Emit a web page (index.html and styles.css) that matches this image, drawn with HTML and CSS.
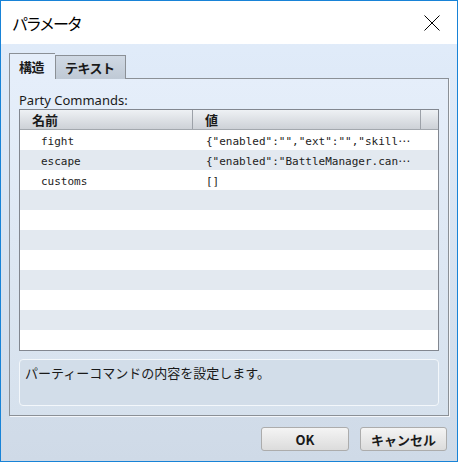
FILE: index.html
```html
<!DOCTYPE html>
<html lang="ja">
<head>
<meta charset="utf-8">
<title>パラメータ</title>
<link rel="stylesheet" href="styles.css">
</head>
<body>
<div class="window">
  <div class="titlebar">
    <span class="title">パラメータ</span>
    <svg class="close" width="16" height="16" viewBox="0 0 16 16"><path d="M0.5 0.5 L15.5 15.5 M15.5 0.5 L0.5 15.5" stroke="#000" stroke-width="1" fill="none"/></svg>
  </div>
  <div class="content">
    <div class="tabs">
      <div class="tab active">構造</div>
      <div class="tab">テキスト</div>
    </div>
    <div class="panel">
      <div class="label">Party Commands:</div>
      <div class="table">
        <div class="thead">
          <div class="th c1">名前</div>
          <div class="th c2">値</div>
          <div class="th c3"></div>
        </div>
        <div class="row"><span class="name">fight</span><span class="val">{"enabled":"","ext":"","skill<span class="ell">⋯</span></span></div>
        <div class="row"><span class="name">escape</span><span class="val">{"enabled":"BattleManager.can<span class="ell">⋯</span></span></div>
        <div class="row"><span class="name">customs</span><span class="val">[]</span></div>
        <div class="row"></div>
        <div class="row"></div>
        <div class="row"></div>
        <div class="row"></div>
        <div class="row"></div>
        <div class="row"></div>
        <div class="row"></div>
        <div class="row"></div>
      </div>
      <div class="desc">パーティーコマンドの内容を設定します。</div>
    </div>
    <div class="buttons">
      <div class="btn ok">OK</div>
      <div class="btn cancel">キャンセル</div>
    </div>
  </div>
</div>
</body>
</html>
```
FILE: styles.css
```css
html, body {
  margin: 0;
  padding: 0;
}
body {
  font-family: "Noto Sans", "Noto Sans CJK JP", sans-serif;
  color: #1a1a1a;
}
.window {
  width: 458px;
  height: 462px;
  box-sizing: border-box;
  border: 1px solid #1883d7;
  display: flex;
  flex-direction: column;
  background: linear-gradient(#e2edfb, #cfdae7);
}
.titlebar {
  height: 43px;
  background: #fff;
  display: flex;
  align-items: center;
  justify-content: space-between;
  padding: 0 17px 0 11px;
  flex-shrink: 0;
}
.title {
  font-family: "Noto Sans CJK JP", sans-serif;
  font-size: 16px;
  letter-spacing: -2.2px;
  color: #000;
  margin-top: 0;
}
.close {
  display: block;
  margin-top: 1px;
}
.content {
  display: flex;
  flex-direction: column;
  padding: 10px 9px 0 8px;
}
.tabs {
  display: flex;
  align-items: flex-end;
  height: 25px;
  position: relative;
  z-index: 1;
  margin-bottom: -1px;
}
.tab {
  font-family: "Noto Sans CJK JP", sans-serif;
  font-weight: bold;
  font-size: 13px;
  letter-spacing: -0.5px;
  color: #1a1a1a;
  box-sizing: border-box;
  height: 24px;
  border: 1px solid #8b9096;
  border-bottom: none;
  background: linear-gradient(#d0d9e4, #bfc9d5);
  padding: 0 10px 0 9px;
  display: flex;
  align-items: center;
}
.tab.active {
  height: 26px;
  background: #e5eefa;
  border-right: none;
  padding: 0 9px 0 9px;
  width: 46px;
}
.tab:not(.active) {
  width: 71px;
  padding-left: 9px;
}
.panel {
  box-sizing: border-box;
  width: 440px;
  height: 338px;
  border: 1px solid #8b9096;
  box-shadow: 1px 1px 0 #f4f7fb;
  padding: 13px 9px 9px 9px;
  display: flex;
  flex-direction: column;
  background: linear-gradient(#e5eefa, #d6e1ed);
}
.label {
  font-size: 13px;
  line-height: 16px;
  height: 16px;
  margin-bottom: 1px;
  color: #1a1a1a;
}
.table {
  box-sizing: border-box;
  height: 242px;
  border: 1px solid #828790;
  background: #fff;
  display: flex;
  flex-direction: column;
}
.thead {
  display: grid;
  grid-template-columns: 173px 228px 17px;
  height: 20px;
  box-sizing: border-box;
  border-bottom: 1px solid #a3a8ae;
  background: linear-gradient(#eef1f4, #cdd1d7);
}
.th {
  font-family: "Noto Sans CJK JP", sans-serif;
  font-weight: bold;
  font-size: 13px;
  line-height: 19px;
  padding-left: 12px;
  color: #1a1a1a;
  border-right: 1px solid #9ca1a8;
}
.th.c3 {
  border-right: none;
  padding: 0;
}
.row {
  box-sizing: border-box;
  height: 20px;
  padding-top: 2px;
  overflow: hidden;
  display: grid;
  grid-template-columns: 174px 1fr;
  font-family: "DejaVu Sans Mono", monospace;
  font-size: 11px;
  line-height: 19px;
  color: #1c1c1c;
  white-space: nowrap;
}
.row:nth-of-type(2n+1) {
  background: #e3e9f0;
}
.name {
  padding-left: 21px;
}
.val {
  padding-left: 12px;
  overflow: hidden;
}
.ell {
  font-family: "DejaVu Sans", sans-serif;
  font-size: 12px;
  letter-spacing: 0;
}
.desc {
  box-sizing: border-box;
  margin-top: 8px;
  height: 47px;
  border: 1px solid #f3f7fb;
  border-radius: 4px;
  background: #d2dde9;
  padding: 3px 0 0 5px;
  font-family: "Noto Sans CJK JP", sans-serif;
  font-size: 13px;
  line-height: 20px;
  color: #1a1a1a;
}
.buttons {
  display: flex;
  justify-content: flex-end;
  gap: 11px;
  margin-top: 11px;
  padding-right: 1px;
}
.btn {
  box-sizing: border-box;
  height: 24px;
  border: 1px solid #acacac;
  border-radius: 3px;
  background: linear-gradient(#f4f4f4, #dcdcdc);
  font-family: "Noto Sans CJK JP", sans-serif;
  font-weight: bold;
  font-size: 13px;
  color: #1a1a1a;
  display: flex;
  align-items: center;
  justify-content: center;
}
.ok {
  width: 88px;
}
.cancel {
  width: 87px;
}
```
